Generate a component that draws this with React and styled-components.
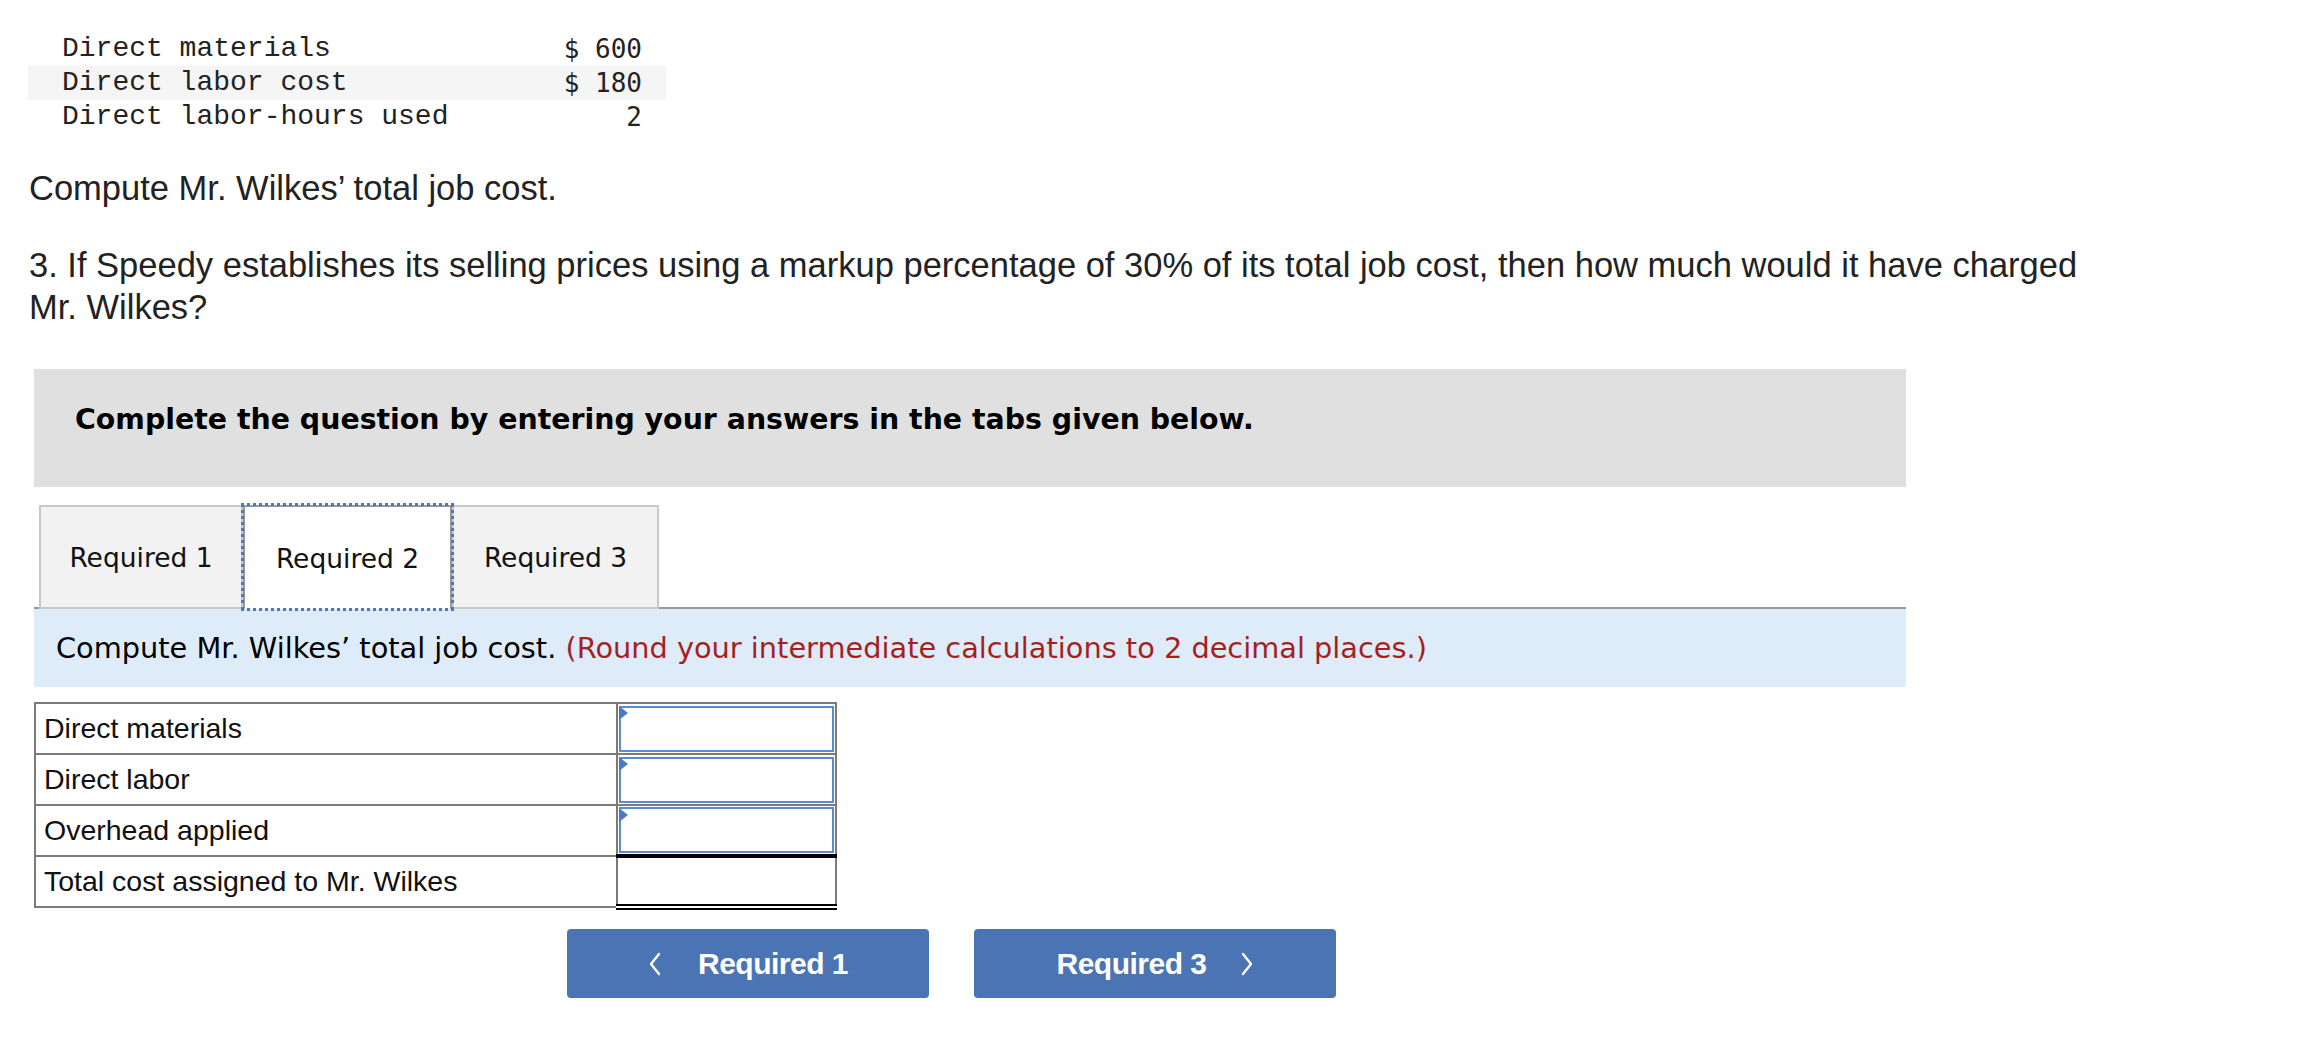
import React from "react";
import styled, { createGlobalStyle } from "styled-components";

const GlobalStyle = createGlobalStyle`
  html, body {
    margin: 0;
    padding: 0;
    background: #fff;
  }
  body {
    font-family: "Liberation Sans", Arial, sans-serif;
    color: #222;
  }
`;

const Page = styled.div`
  padding: 32px 0 60px;
`;

const DataTable = styled.table`
  margin-left: 28px;
  width: 638px;
  border-collapse: collapse;

  td {
    height: 34px;
    padding: 0;
    font-size: 28px;
    line-height: 34px;
    white-space: pre;
  }

  tr:nth-child(2) {
    background: #f5f5f5;
  }
`;

const DataLabel = styled.td`
  padding-left: 34px !important;
  font-family: "Liberation Mono", "Courier New", monospace;
  color: #222;
`;

const DataValue = styled.td`
  text-align: right;
  padding-right: 24px !important;
  font-family: "DejaVu Sans Mono", monospace;
  font-size: 26px !important;
  color: #222;
`;

const Question = styled.p`
  margin: ${({ $top }) => $top}px 0 0 29px;
  max-width: 2080px;
  font-family: "Liberation Sans", Arial, sans-serif;
  font-size: 34.5px;
  line-height: 42px;
  color: #222;
`;

const Section = styled.div`
  margin: 41px 0 0 34px;
  width: 1872px;
`;

const Banner = styled.div`
  box-sizing: border-box;
  height: 118px;
  padding: 34px 0 0 41px;
  background: #e0e0e0;
  font-family: "DejaVu Sans", Verdana, sans-serif;
  font-weight: bold;
  font-size: 28.4px;
  color: #000;
`;

const TabBar = styled.div`
  display: flex;
  align-items: flex-end;
  margin-top: 14px;
  padding-left: 5px;
  border-bottom: 2px solid #999;
  height: 106px;
`;

const Tab = styled.div`
  box-sizing: border-box;
  width: ${({ $w }) => $w}px;
  height: 104px;
  margin-bottom: -2px;
  display: flex;
  align-items: center;
  justify-content: center;
  font-family: "DejaVu Sans", Tahoma, sans-serif;
  font-size: 26.5px;
  color: #111;
  background: ${({ $active }) => ($active ? "#fff" : "#f2f2f2")};
  border: 2px solid ${({ $active }) => ($active ? "#999" : "#c8c8c8")};
  border-bottom: ${({ $active }) => ($active ? "none" : "2px solid #c8c8c8")};
  outline: ${({ $active }) => ($active ? "3px dotted #4a78c4" : "none")};
  outline-offset: -1px;
  position: relative;
  z-index: ${({ $active }) => ($active ? 1 : 0)};
`;

const Instruction = styled.div`
  box-sizing: border-box;
  height: 78px;
  padding-left: 22px;
  display: flex;
  align-items: center;
  background: #deebf8;
  font-family: "DejaVu Sans", Tahoma, sans-serif;
  font-size: 28.8px;
  color: #000;
  white-space: pre;
`;

const Note = styled.span`
  color: #a51f1f;
`;

const AnswerTable = styled.table`
  margin-top: 15px;
  width: 803px;
  border-collapse: collapse;
  table-layout: fixed;
`;

const LabelCell = styled.td`
  box-sizing: border-box;
  height: 51px;
  padding: 0 0 0 8px;
  border: 2px solid #7a7a7a;
  font-family: "Liberation Sans", Arial, sans-serif;
  font-size: 28.5px;
  color: #111;
  white-space: nowrap;
`;

const ValueCell = styled.td`
  box-sizing: border-box;
  width: 219px;
  height: 51px;
  padding: 0;
  border: 2px solid #7a7a7a;
  border-top: ${({ $total }) => ($total ? "4px solid #000" : "2px solid #7a7a7a")};
  border-bottom: ${({ $total }) => ($total ? "6px double #000" : "2px solid #7a7a7a")};
  position: relative;
`;

const Input = styled.div`
  box-sizing: border-box;
  height: 46px;
  margin: 1px 1px;
  border: 2px solid #5d8bd1;
  background: #fff;
`;

const Flag = styled.span`
  position: absolute;
  top: 2px;
  left: 1px;
  width: 0;
  height: 0;
  border-top: 7px solid transparent;
  border-bottom: 7px solid transparent;
  border-left: 9px solid #4a78c4;
`;

const NavRow = styled.div`
  display: flex;
  gap: 45px;
  margin-top: 19px;
  padding-left: 533px;
`;

const NavButton = styled.button`
  box-sizing: border-box;
  width: 362px;
  height: 69px;
  display: flex;
  align-items: center;
  justify-content: center;
  gap: ${({ $gap }) => $gap}px;
  border: none;
  border-radius: 4px;
  background: #4a74b4;
  color: #fff;
  font-family: "Liberation Sans", Arial, sans-serif;
  font-weight: bold;
  font-size: 30px;
  letter-spacing: -0.5px;
  cursor: pointer;
`;

const Chevron = ({ dir }) => (
  <svg width="14" height="24" viewBox="0 0 14 24" fill="none">
    <polyline
      points={dir === "left" ? "11,2 3,12 11,22" : "3,2 11,12 3,22"}
      stroke="#fff"
      strokeWidth="2.4"
      strokeLinecap="round"
      strokeLinejoin="round"
    />
  </svg>
);

const given = [
  ["Direct materials", "$ 600"],
  ["Direct labor cost", "$ 180"],
  ["Direct labor-hours used", "2"],
];

const answers = ["Direct materials", "Direct labor", "Overhead applied"];

export default function App() {
  return (
    <Page>
      <GlobalStyle />
      <DataTable>
        <tbody>
          {given.map(([label, value]) => (
            <tr key={label}>
              <DataLabel>{label}</DataLabel>
              <DataValue>{value}</DataValue>
            </tr>
          ))}
        </tbody>
      </DataTable>

      <Question $top={33}>Compute Mr. Wilkes’ total job cost.</Question>
      <Question $top={35}>
        3. If Speedy establishes its selling prices using a markup percentage of 30% of its
        total job cost, then how much would it have charged Mr. Wilkes?
      </Question>

      <Section>
        <Banner>Complete the question by entering your answers in the tabs given below.</Banner>

        <TabBar>
          <Tab $w={204}>Required 1</Tab>
          <Tab $w={209} $active>
            Required 2
          </Tab>
          <Tab $w={207}>Required 3</Tab>
        </TabBar>

        <Instruction>
          Compute Mr. Wilkes’ total job cost.{" "}
          <Note>(Round your intermediate calculations to 2 decimal places.)</Note>
        </Instruction>

        <AnswerTable>
          <tbody>
            {answers.map((label) => (
              <tr key={label}>
                <LabelCell>{label}</LabelCell>
                <ValueCell>
                  <Input />
                  <Flag />
                </ValueCell>
              </tr>
            ))}
            <tr>
              <LabelCell>Total cost assigned to Mr. Wilkes</LabelCell>
              <ValueCell $total />
            </tr>
          </tbody>
        </AnswerTable>

        <NavRow>
          <NavButton $gap={36}>
            <Chevron dir="left" />
            Required 1
          </NavButton>
          <NavButton $gap={33}>
            Required 3
            <Chevron dir="right" />
          </NavButton>
        </NavRow>
      </Section>
    </Page>
  );
}
